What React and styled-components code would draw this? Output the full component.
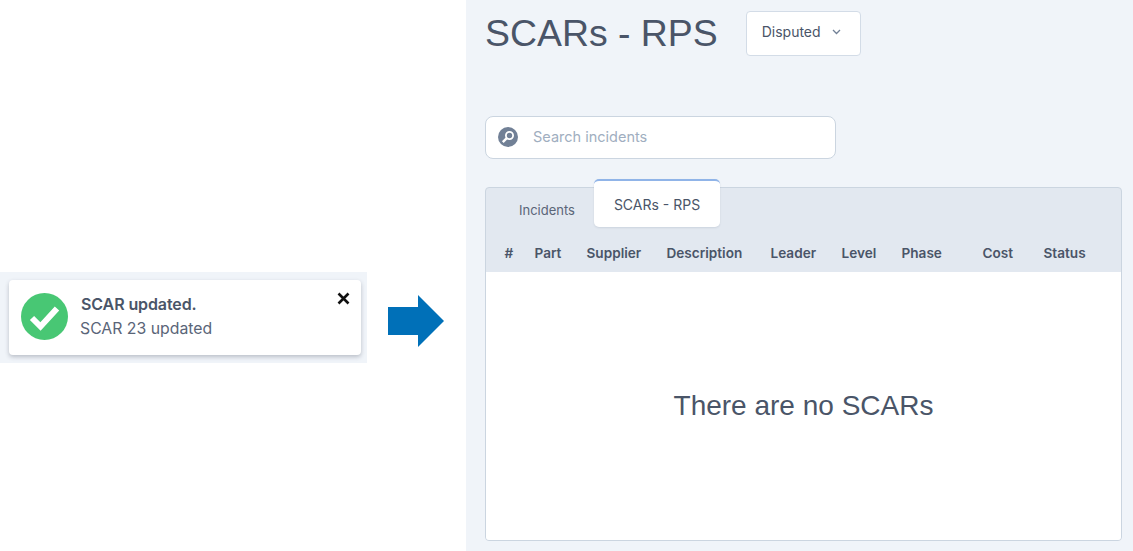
import React from 'react';
import styled, { createGlobalStyle } from 'styled-components';

const GlobalStyle = createGlobalStyle`
  html, body {
    margin: 0;
    padding: 0;
    background: #fff;
    overflow: hidden;
  }
  * { box-sizing: border-box; }
`;

const Page = styled.div`
  display: flex;
  width: 1133px;
  height: 551px;
  font-family: Inter, "Liberation Sans", sans-serif;
  color: #4a5568;
`;

const LeftPane = styled.section`
  width: 466px;
  padding-top: 272px;
  display: flex;
  align-items: flex-start;
  gap: 21px;
  background: #fff;
`;

const ToastStrip = styled.div`
  width: 367px;
  height: 91px;
  padding: 8px 6px 8px 9px;
  background: #f0f4f9;
`;

const Toast = styled.div`
  position: relative;
  height: 75px;
  display: flex;
  align-items: center;
  gap: 12px;
  padding: 0 0 2px 12px;
  background: #fff;
  border-radius: 4px;
  box-shadow: 0 2px 4px rgba(45, 55, 72, 0.28);
`;

const ToastBody = styled.div`
  display: flex;
  flex-direction: column;
  gap: 5px;
`;

const ToastTitle = styled.div`
  font-size: 16px;
  line-height: 20px;
  font-weight: 600;
  letter-spacing: -0.1px;
  color: #4a5568;
  margin-left: 1px;
`;

const ToastText = styled.div`
  font-size: 15.8px;
  line-height: 20px;
  color: #5a6578;
`;

const CloseIcon = styled.svg`
  position: absolute;
  top: 12px;
  right: 11px;
`;

const ArrowIcon = styled.svg`
  margin-top: 23px;
  flex: none;
`;

const RightPane = styled.main`
  flex: 1;
  padding: 11px 11px 10px 19px;
  display: flex;
  flex-direction: column;
  background: #f0f4f9;
`;

const TitleRow = styled.header`
  display: flex;
  align-items: flex-start;
  gap: 28px;
`;

const PageTitle = styled.h1`
  margin: 0;
  padding-top: 1px;
  font-family: "Liberation Sans", Arial, sans-serif;
  font-size: 37.4px;
  line-height: 42px;
  font-weight: 400;
  color: #4a5568;
`;

const Dropdown = styled.button`
  width: 115px;
  height: 45px;
  display: flex;
  align-items: center;
  gap: 11px;
  padding: 0 0 4px 15px;
  background: #fff;
  border: 1.5px solid #d3dce7;
  border-radius: 4px;
  font-family: inherit;
  font-size: 14px;
  color: #4a5568;
`;

const SearchBox = styled.div`
  width: 351px;
  height: 43px;
  margin-top: 60px;
  display: flex;
  align-items: center;
  gap: 15px;
  padding: 0 0 2px 12px;
  background: #fff;
  border: 1.5px solid #cbd5e0;
  border-radius: 8px;
`;

const SearchInput = styled.input`
  border: 0;
  outline: 0;
  padding: 0;
  flex: 1;
  background: transparent;
  font-family: inherit;
  font-size: 14.5px;
  color: #4a5568;

  &::placeholder {
    color: #a0aec0;
    opacity: 1;
  }
`;

const Card = styled.section`
  flex: 1;
  margin-top: 28px;
  display: flex;
  flex-direction: column;
  border: 1.5px solid #cbd5e0;
  border-radius: 4px;
  background: #e2e8f0;
`;

const TabRow = styled.div`
  height: 46px;
  display: flex;
  align-items: flex-start;
  padding-left: 14px;
`;

const Tab = styled.div`
  width: ${p => (p.$active ? '126px' : '94px')};
  height: ${p => (p.$active ? '48px' : '44px')};
  margin-top: ${p => (p.$active ? '-9px' : '0')};
  display: flex;
  align-items: center;
  justify-content: center;
  font-size: ${p => (p.$active ? '14px' : '13px')};
  color: ${p => (p.$active ? '#4a5568' : '#5a6578')};
  background: ${p => (p.$active ? '#fff' : 'transparent')};
  border-top: ${p => (p.$active ? '2px solid #90b4e8' : '0')};
  border-radius: ${p => (p.$active ? '5px' : '0')};
  box-shadow: ${p => (p.$active ? '0 1px 2px rgba(113, 128, 150, 0.2)' : 'none')};
`;

const HeadRow = styled.div`
  height: 38px;
  display: grid;
  grid-template-columns: 30px 52px 80px 104px 71px 60px 81px 61px auto;
  align-items: center;
  padding: 0 0 1px 18.5px;
`;

const HeadCell = styled.div`
  font-size: 13.6px;
  font-weight: 600;
  color: #4a5568;
`;

const EmptyBody = styled.div`
  flex: 1;
  display: flex;
  align-items: center;
  justify-content: center;
  background: #fff;
  border-radius: 0 0 3px 3px;
  font-family: "Liberation Sans", Arial, sans-serif;
  font-size: 28px;
  color: #4a5568;
`;

const columns = ['#', 'Part', 'Supplier', 'Description', 'Leader', 'Level', 'Phase', 'Cost', 'Status'];

const CheckBadge = () => (
  <svg width="47" height="47" viewBox="0 0 47 47" style={{ flex: 'none' }}>
    <circle cx="23.5" cy="23.5" r="23.5" fill="#48c774" />
    <path d="M11 25l8.5 8.5L36 15.5" fill="none" stroke="#fff" strokeWidth="6" />
  </svg>
);

const SearchGlyph = () => (
  <svg width="20" height="20" viewBox="0 0 20 20" style={{ flex: 'none' }}>
    <circle cx="10" cy="10" r="10" fill="#718096" />
    <circle cx="11.5" cy="8.5" r="3.6" fill="none" stroke="#fff" strokeWidth="1.8" />
    <path d="M8.8 11.2L4.8 15.2" stroke="#fff" strokeWidth="2.4" />
  </svg>
);

export default function App() {
  return (
    <Page>
      <GlobalStyle />
      <LeftPane>
        <ToastStrip>
          <Toast>
            <CheckBadge />
            <ToastBody>
              <ToastTitle>SCAR updated.</ToastTitle>
              <ToastText>SCAR 23 updated</ToastText>
            </ToastBody>
            <CloseIcon width="13" height="13" viewBox="0 0 13 13">
              <path d="M1.5 1.5l10 10M11.5 1.5l-10 10" stroke="#111" strokeWidth="2.6" />
            </CloseIcon>
          </Toast>
        </ToastStrip>
        <ArrowIcon width="56" height="52" viewBox="0 0 56 52">
          <path d="M0 12h30V0l26 26-26 26V40H0z" fill="#0070b8" />
        </ArrowIcon>
      </LeftPane>

      <RightPane>
        <TitleRow>
          <PageTitle>SCARs - RPS</PageTitle>
          <Dropdown>
            Disputed
            <svg width="9" height="6" viewBox="0 0 9 6">
              <path d="M1 1l3.5 3.5L8 1" fill="none" stroke="#718096" strokeWidth="1.3" />
            </svg>
          </Dropdown>
        </TitleRow>

        <SearchBox>
          <SearchGlyph />
          <SearchInput placeholder="Search incidents" />
        </SearchBox>

        <Card>
          <TabRow>
            <Tab>Incidents</Tab>
            <Tab $active>SCARs - RPS</Tab>
          </TabRow>
          <HeadRow>
            {columns.map(c => <HeadCell key={c}>{c}</HeadCell>)}
          </HeadRow>
          <EmptyBody>There are no SCARs</EmptyBody>
        </Card>
      </RightPane>
    </Page>
  );
}
